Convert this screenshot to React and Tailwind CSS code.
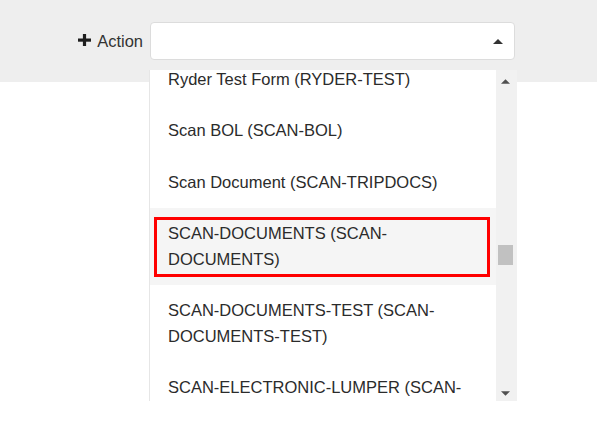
import React from "react";

const items = [
  { label: "Ryder Test Form (RYDER-TEST)" },
  { label: "Scan BOL (SCAN-BOL)" },
  { label: "Scan Document (SCAN-TRIPDOCS)" },
  { label: "SCAN-DOCUMENTS (SCAN-DOCUMENTS)", active: true },
  { label: "SCAN-DOCUMENTS-TEST (SCAN-DOCUMENTS-TEST)" },
  { label: "SCAN-ELECTRONIC-LUMPER (SCAN-ELECTRONIC-LUMPER)" },
];

function Caret({ up = true, color = "#333", w = 10, h = 5 }) {
  return (
    <svg width={w} height={h} viewBox="0 0 10 5" className="block">
      {up ? (
        <polygon points="0,5 5,0 10,5" fill={color} />
      ) : (
        <polygon points="0,0 10,0 5,5" fill={color} />
      )}
    </svg>
  );
}

export default function App() {
  return (
    <div
      className="relative w-[597px] h-[421px] bg-white overflow-hidden text-[#2b2b2b]"
      style={{ fontFamily: '"Liberation Sans", Arial, sans-serif' }}
    >
      <div className="h-[82px] bg-[#eeeeee] flex items-start pt-[22px]">
        <div className="w-[143px] h-[38px] flex items-center justify-end">
          <svg width="13" height="12" viewBox="0 0 13 12" className="mr-[6px] mt-[-2px]">
            <rect x="0" y="4.5" width="13" height="3.2" fill="#1e1e1e" />
            <rect x="4.9" y="0" width="3.2" height="12" fill="#1e1e1e" />
          </svg>
          <span className="text-[16.5px] leading-none text-[#333]">Action</span>
        </div>
        <div className="ml-[7px] w-[365px] h-[38px] bg-white border border-[#dcdcdc] rounded-[4px] flex items-center justify-end pr-[11px]">
          <Caret up color="#333" />
        </div>
      </div>

      <div className="absolute left-[149px] top-[70px] w-[368px] h-[331px] bg-white border-l border-[#e6e6e6] flex">
        <div className="flex-1 overflow-hidden">
          <div className="mt-[-16.5px]">
            {items.map((it, i) => (
              <div
                key={i}
                className={
                  "relative pl-[18px] pr-[18px] py-[13px] text-[16.5px] leading-[25.5px] " +
                  (it.active ? "bg-[#f5f5f5]" : "bg-white")
                }
              >
                {it.label}
                {it.active && (
                  <div className="absolute left-[4px] right-[6px] top-[9px] bottom-[8px] border-[3px] border-[#ff0000]" />
                )}
              </div>
            ))}
          </div>
        </div>
        <div className="w-[21px] h-full bg-[#f1f1f1] flex flex-col">
          <div className="h-[175px] flex justify-center pt-[9px] pr-[2px]">
            <Caret up color="#505050" w={9} h={5} />
          </div>
          <div className="ml-[2px] w-[15px] h-[20px] bg-[#c1c1c1]" />
          <div className="flex-1" />
          <div className="flex justify-center pb-[5px] pr-[2px]">
            <Caret up={false} color="#505050" w={9} h={5} />
          </div>
        </div>
      </div>
    </div>
  );
}
